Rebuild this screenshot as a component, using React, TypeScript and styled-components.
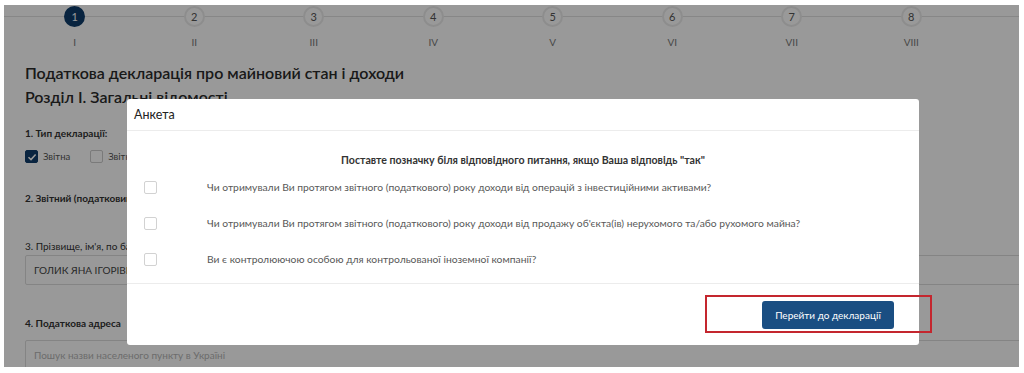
import styled, { createGlobalStyle } from "styled-components";

const GlobalStyle = createGlobalStyle`
  html, body { margin: 0; padding: 0; background: #ffffff; }
  body { font-family: Lato, "Open Sans", "Liberation Sans", sans-serif; }
  * { box-sizing: border-box; }
`;

const steps = ["I", "II", "III", "IV", "V", "VI", "VII", "VIII"];

const questions = [
  "Чи отримували Ви протягом звітного (податкового) року доходи від операцій з інвестиційними активами?",
  "Чи отримували Ви протягом звітного (податкового) року доходи від продажу об'єкта(ів) нерухомого та/або рухомого майна?",
  "Ви є контролюючою особою для контрольованої іноземної компанії?",
];

export default function App() {
  return (
    <>
      <GlobalStyle />
      <Frame>
        <Stepper>
          {steps.map((s, i) => (
            <Step key={s}>
              <StepCircle active={i === 0}>{i + 1}</StepCircle>
              <StepLabel>{s}</StepLabel>
            </Step>
          ))}
        </Stepper>

        <Page>
          <Title>Податкова декларація про майновий стан і доходи</Title>
          <Title>Розділ І. Загальні відомості</Title>

          <FieldLabel bold gap={17}>1. Тип декларації:</FieldLabel>
          <TypeRow>
            <TypeOption>
              <PageCheck checked>
                <svg width="10" height="10" viewBox="0 0 10 10">
                  <path d="M1.5 5.2 L4 7.6 L8.6 2.4" stroke="#fff" strokeWidth="1.5" fill="none" />
                </svg>
              </PageCheck>
              Звітна
            </TypeOption>
            <TypeOption>
              <PageCheck />
              Звітна нова
            </TypeOption>
          </TypeRow>

          <FieldLabel bold gap={28}>2. Звітний (податковий) період</FieldLabel>

          <FieldLabel gap={34}>3. Прізвище, ім'я, по батькові</FieldLabel>
          <Input gap={2}>ГОЛИК ЯНА ІГОРІВНА</Input>

          <FieldLabel bold gap={31}>4. Податкова адреса</FieldLabel>
          <Input gap={10} placeholder>Пошук назви населеного пункту в Україні</Input>
        </Page>

        <Overlay />

        <Modal>
          <ModalHeader>Анкета</ModalHeader>
          <ModalBody>
            <ModalLead>Поставте позначку біля відповідного питання, якщо Ваша відповідь "так"</ModalLead>
            {questions.map((q) => (
              <QuestionRow key={q}>
                <Box />
                <QuestionText>{q}</QuestionText>
              </QuestionRow>
            ))}
          </ModalBody>
          <ModalFooter>
            <PrimaryButton>Перейти до декларації</PrimaryButton>
          </ModalFooter>
        </Modal>

        <Highlight />
      </Frame>
    </>
  );
}

const Frame = styled.div`
  position: relative;
  margin: 5px 5px 0 4px;
  width: 1015px;
  height: 362px;
  overflow: hidden;
  background: #ffffff;
`;

const Stepper = styled.div`
  display: flex;
  width: 956px;
  margin-left: 11px;
  position: relative;
  &::before {
    content: "";
    position: absolute;
    left: -11px;
    right: -60px;
    top: 11px;
    height: 1px;
    background: #e2e2e2;
  }
`;

const Step = styled.div`
  flex: 1;
  display: flex;
  flex-direction: column;
  align-items: center;
  padding-top: 1px;
  position: relative;
`;

const StepCircle = styled.div<{ active?: boolean }>`
  width: 21px;
  height: 21px;
  border-radius: 50%;
  display: flex;
  align-items: center;
  justify-content: center;
  font-size: 11px;
  background: ${(p) => (p.active ? "#0f3d6b" : "#ffffff")};
  color: ${(p) => (p.active ? "#ffffff" : "#555555")};
  border: 2px solid ${(p) => (p.active ? "#0f3d6b" : "#ececec")};
`;

const StepLabel = styled.div`
  margin-top: 9px;
  font-size: 10px;
  color: #777777;
  line-height: 12px;
`;

const Page = styled.div`
  padding: 13px 0 0 21px;
  display: flex;
  flex-direction: column;
  align-items: flex-start;
`;

const Title = styled.div`
  font-size: 16px;
  font-weight: 600;
  color: #2b2b2b;
  line-height: 24px;
`;

const FieldLabel = styled.div<{ bold?: boolean; gap: number }>`
  margin-top: ${(p) => p.gap}px;
  font-size: 10px;
  line-height: 14px;
  font-weight: ${(p) => (p.bold ? 700 : 400)};
  color: #333333;
`;

const TypeRow = styled.div`
  display: flex;
  gap: 20px;
  margin-top: 10px;
`;

const TypeOption = styled.div`
  display: flex;
  align-items: center;
  gap: 5px;
  font-size: 9.5px;
  color: #555555;
`;

const PageCheck = styled.span<{ checked?: boolean }>`
  width: 13px;
  height: 13px;
  border-radius: 2px;
  display: flex;
  align-items: center;
  justify-content: center;
  background: ${(p) => (p.checked ? "#0f3d6b" : "#ffffff")};
  border: 1px solid ${(p) => (p.checked ? "#0f3d6b" : "#cccccc")};
`;

const Input = styled.div<{ placeholder?: boolean; gap: number }>`
  margin-top: ${(p) => p.gap}px;
  width: 1100px;
  height: 30px;
  border: 1px solid #dddddd;
  border-radius: 2px;
  padding: 0 8px;
  display: flex;
  align-items: center;
  font-size: 10px;
  color: ${(p) => (p.placeholder ? "#b5b5b5" : "#444444")};
`;

const Overlay = styled.div`
  position: absolute;
  inset: 0;
  background: rgba(0, 0, 0, 0.4);
`;

const Modal = styled.div`
  position: absolute;
  left: 123px;
  top: 94px;
  width: 792px;
  height: 246px;
  background: #ffffff;
  border-radius: 3px;
  display: flex;
  flex-direction: column;
`;

const ModalHeader = styled.div`
  height: 32px;
  padding-left: 7px;
  display: flex;
  align-items: center;
  font-size: 12.5px;
  color: #222222;
  border-bottom: 1px solid #ececec;
`;

const ModalBody = styled.div`
  padding: 22px 0 6px 17px;
  display: flex;
  flex-direction: column;
  border-bottom: 1px solid #ececec;
`;

const ModalLead = styled.div`
  text-align: center;
  font-size: 10.6px;
  line-height: 14px;
  font-weight: 700;
  color: #333333;
  padding-right: 17px;
  margin-bottom: 2px;
`;

const QuestionRow = styled.div`
  height: 36px;
  display: flex;
  align-items: center;
`;

const Box = styled.span`
  width: 13px;
  height: 13px;
  border: 1px solid #d2d2d2;
  border-radius: 2px;
  flex-shrink: 0;
`;

const QuestionText = styled.span`
  margin-left: 50px;
  font-size: 10.3px;
  color: #585858;
`;

const ModalFooter = styled.div`
  flex: 1;
  display: flex;
  align-items: center;
  justify-content: flex-end;
  padding-right: 25px;
`;

const PrimaryButton = styled.button`
  width: 132px;
  height: 28px;
  border: none;
  border-radius: 3px;
  background: #1a4e82;
  color: #ffffff;
  font-family: Lato, "Open Sans", "Liberation Sans", sans-serif;
  font-size: 10px;
  cursor: pointer;
`;

const Highlight = styled.div`
  position: absolute;
  left: 701px;
  top: 290px;
  width: 227px;
  height: 38px;
  border: 2px solid #c4262e;
`;
